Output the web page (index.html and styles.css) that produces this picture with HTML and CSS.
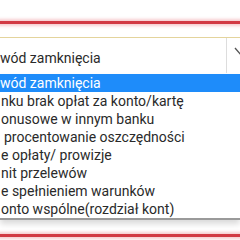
FILE: index.html
```html
<!DOCTYPE html>
<html lang="pl">
<head>
    <meta charset="UTF-8">
    <meta name="viewport" content="width=device-width, initial-scale=1.0">
    <title>Powód zamknięcia</title>
    <link rel="stylesheet" href="styles.css">
</head>
<body>

    <div class="page">
        <div class="rule"></div>

        <div class="field">
            <div class="select">
                <span class="value">wód zamknięcia</span>
                <span class="arrow">
                    <svg width="14" height="10" viewBox="0 0 14 10">
                        <path d="M1 1 L7 8 L13 1" fill="none" stroke="#555" stroke-width="1.3"/>
                    </svg>
                </span>
            </div>

            <ul class="options">
                <li class="selected">wód zamknięcia</li>
                <li>nku brak opłat za konto/kartę</li>
                <li>onusowe w innym banku</li>
                <li class="shift">procentowanie oszczędności</li>
                <li>e opłaty/ prowizje</li>
                <li>nit przelewów</li>
                <li>e spełnieniem warunków</li>
                <li>onto wspólne(rozdział kont)</li>
            </ul>
        </div>

        <div class="rule"></div>
    </div>

</body>
</html>
```

FILE: styles.css
```css
/* General Reset */
* {
    margin: 0;
    padding: 0;
    box-sizing: border-box;
}

body {
    font-family: Roboto, "Liberation Sans", sans-serif;
    background-color: #fff;
    width: 240px;
    height: 240px;
    overflow: hidden;
}

.page {
    padding-top: 21px;
}

.rule {
    height: 3px;
    background-color: #d23a44;
    box-shadow: 0 0 3px 2px rgba(226, 90, 100, 0.3);
}

.field {
    margin: 13px 0 14px;
}

.select {
    display: flex;
    align-items: center;
    height: 36px;
    border-top: 1px solid #e4d49c;
    font-size: 14px;
    color: #2a2a2a;
    padding-top: 4px;
}

.value {
    flex: 1;
}

.arrow {
    width: 14px;
    height: 35px;
    margin-top: -4px;
    border-left: 1px solid #ddd;
    padding: 6px 0 0 7px;
    overflow: hidden;
}

.options {
    list-style: none;
    font-size: 14px;
    color: #2a2a2a;
    margin-top: 1px;
    border-bottom: 2px solid #9a9a9a;
    box-shadow: 0 4px 6px rgba(0, 0, 0, 0.15);
}

.options li {
    height: 18px;
    line-height: 18px;
    padding-left: 1px;
    white-space: nowrap;
}

.options li.selected {
    background-color: #1e8cfa;
    color: #fff;
    padding-left: 0;
}

.options li.shift {
    padding-left: 4px;
}
```
